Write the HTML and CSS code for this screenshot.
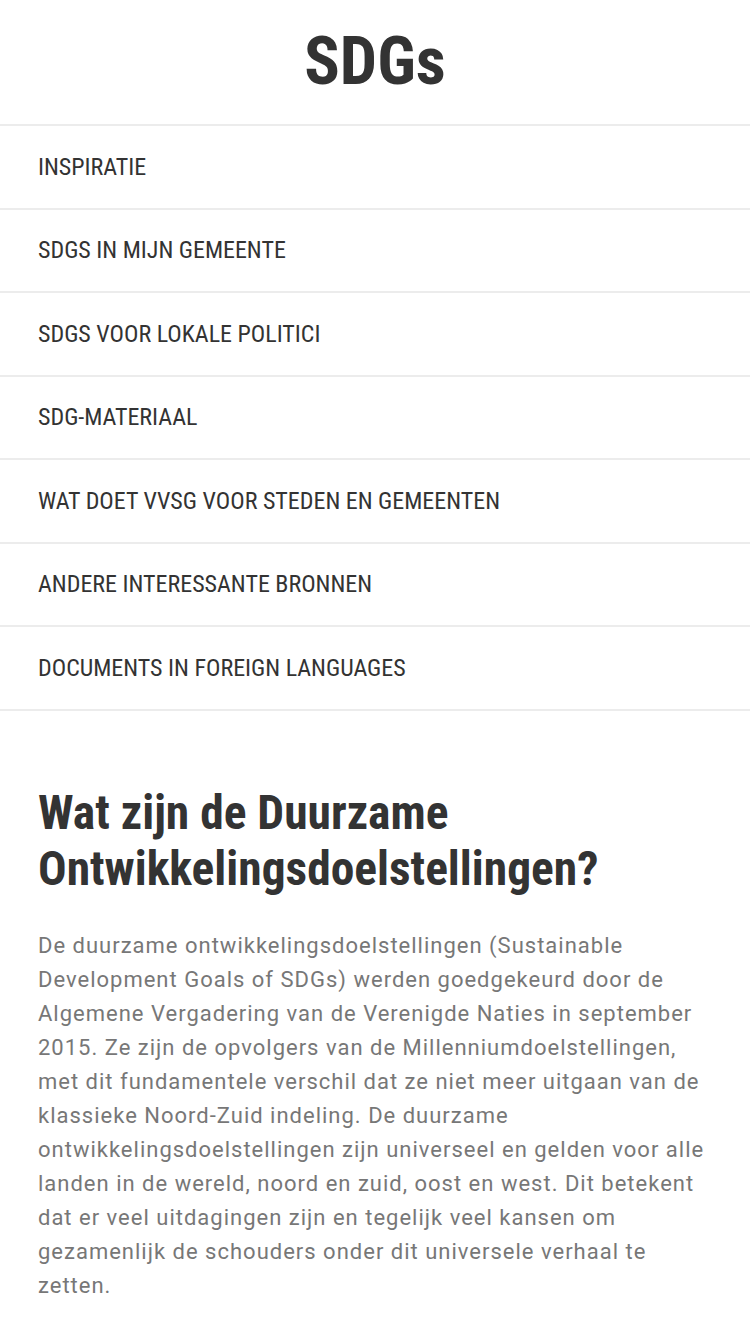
FILE: index.html
```html
<!DOCTYPE html>
<html lang="nl">
<head>
<meta charset="utf-8">
<title>SDGs</title>
<link rel="stylesheet" href="styles.css">
</head>
<body>
<header class="site-header">
  <h1 class="site-title">SDGs</h1>
</header>
<nav class="menu">
  <a class="menu-item" href="#">INSPIRATIE</a>
  <a class="menu-item" href="#">SDGS IN MIJN GEMEENTE</a>
  <a class="menu-item" href="#">SDGS VOOR LOKALE POLITICI</a>
  <a class="menu-item" href="#">SDG-MATERIAAL</a>
  <a class="menu-item" href="#">WAT DOET VVSG VOOR STEDEN EN GEMEENTEN</a>
  <a class="menu-item" href="#">ANDERE INTERESSANTE BRONNEN</a>
  <a class="menu-item" href="#">DOCUMENTS IN FOREIGN LANGUAGES</a>
</nav>
<main class="content">
  <h2 class="content-title">Wat zijn de Duurzame Ontwikkelingsdoelstellingen?</h2>
  <p class="content-text">De duurzame ontwikkelingsdoelstellingen (Sustainable Development Goals of SDGs) werden goedgekeurd door de Algemene Vergadering van de Verenigde Naties in september 2015. Ze zijn de opvolgers van de Millenniumdoelstellingen, met dit fundamentele verschil dat ze niet meer uitgaan van de klassieke Noord-Zuid indeling. De duurzame ontwikkelingsdoelstellingen zijn universeel en gelden voor alle landen in de wereld, noord en zuid, oost en west. Dit betekent dat er veel uitdagingen zijn en tegelijk veel kansen om gezamenlijk de schouders onder dit universele verhaal te zetten.</p>
</main>
</body>
</html>
```

FILE: styles.css
```css
html, body {
  margin: 0;
  padding: 0;
  background: #fff;
}
body {
  font-family: "Roboto Condensed", Roboto, "Liberation Sans Narrow", sans-serif;
  font-stretch: 75%;
  color: #333;
}
.site-header {
  height: 126px;
  display: flex;
  align-items: center;
  justify-content: center;
  border-bottom: 2px solid #ececec;
  box-sizing: border-box;
}
.site-title {
  margin: 0;
  font-size: 66px;
  font-weight: 700;
  color: #333;
  line-height: 1;
}
.menu {
  display: flex;
  flex-direction: column;
}
.menu-item {
  display: flex;
  align-items: center;
  height: 83.5px;
  box-sizing: border-box;
  padding: 0 38px;
  border-bottom: 2px solid #ececec;
  color: #333;
  text-decoration: none;
  font-size: 24px;
}
.content {
  padding: 74px 38px 0;
}
.content-title {
  margin: 0 0 32px;
  font-size: 47.5px;
  font-weight: 700;
  line-height: 56px;
  color: #333;
}
.content-text {
  margin: 0;
  font-family: Roboto, sans-serif;
  font-stretch: 100%;
  font-size: 22px;
  letter-spacing: 1px;
  line-height: 34px;
  color: #777;
}
```
